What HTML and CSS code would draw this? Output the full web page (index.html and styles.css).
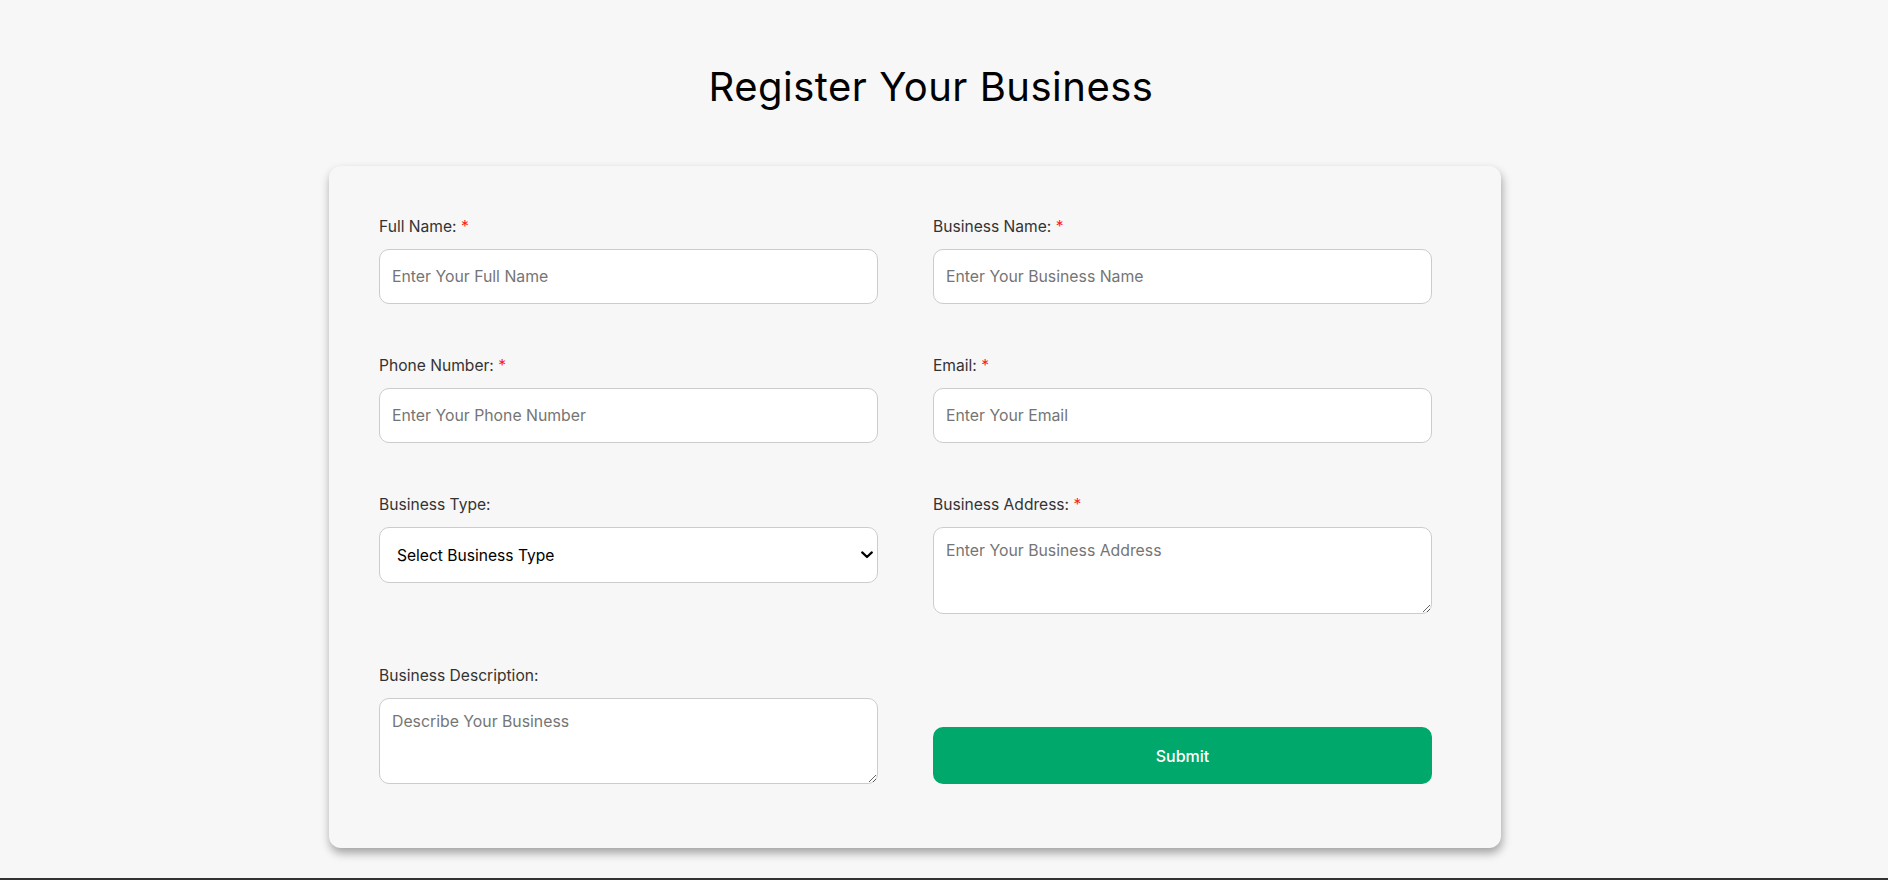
FILE: index.html
```html
<!DOCTYPE html>
<html lang="en">
<head>
<meta charset="utf-8">
<title>Register Your Business</title>
<link rel="stylesheet" href="styles.css">
</head>
<body>
<main class="page">
  <h1 class="title">Register Your Business</h1>
  <form class="card">
    <div class="field">
      <label class="label">Full Name: <span class="req">*</span></label>
      <input class="control" type="text" placeholder="Enter Your Full Name">
    </div>
    <div class="field">
      <label class="label">Business Name: <span class="req">*</span></label>
      <input class="control" type="text" placeholder="Enter Your Business Name">
    </div>
    <div class="field">
      <label class="label">Phone Number: <span class="req">*</span></label>
      <input class="control" type="text" placeholder="Enter Your Phone Number">
    </div>
    <div class="field">
      <label class="label">Email: <span class="req">*</span></label>
      <input class="control" type="text" placeholder="Enter Your Email">
    </div>
    <div class="field">
      <label class="label">Business Type:</label>
      <div class="select-wrap">
        <select class="control select">
          <option>Select Business Type</option>
        </select>
        <svg class="chevron" width="12" height="8" viewBox="0 0 12 8"><path d="M1.2 1.4 L6 6 L10.8 1.4" fill="none" stroke="#000" stroke-width="2.2" stroke-linecap="round" stroke-linejoin="round"/></svg>
      </div>
    </div>
    <div class="field">
      <label class="label">Business Address: <span class="req">*</span></label>
      <textarea class="control area" placeholder="Enter Your Business Address"></textarea>
    </div>
    <div class="field">
      <label class="label">Business Description:</label>
      <textarea class="control area area-desc" placeholder="Describe Your Business"></textarea>
    </div>
    <div class="field field-end">
      <button class="submit" type="button">Submit</button>
    </div>
  </form>
  <div class="footer"></div>
</main>
</body>
</html>
```

FILE: styles.css
```css
html, body {
  margin: 0;
  padding: 0;
  background: #f7f7f7;
}

body {
  font-family: Inter, "Noto Sans", sans-serif;
  color: #333;
}

.page {
  padding-top: 63px;
  display: flex;
  flex-direction: column;
}

.title {
  margin: 0;
  padding-right: 26px;
  text-align: center;
  font-size: 40px;
  letter-spacing: 0.5px;
  line-height: 48px;
  font-weight: 400;
  color: #000;
}

.card {
  box-sizing: border-box;
  width: 1172px;
  margin: 55px 0 0 329px;
  padding: 49px 69px 64px 50px;
  background: #f7f7f7;
  border-radius: 12px;
  box-shadow: 1px 5px 10px rgba(0, 0, 0, 0.35);
  display: grid;
  grid-template-columns: 1fr 1fr;
  column-gap: 55px;
  row-gap: 50px;
}

.field {
  display: flex;
  flex-direction: column;
}

.field-end {
  justify-content: flex-end;
}

.label {
  font-size: 15.6px;
  line-height: 24px;
  color: #333;
  margin-bottom: 10px;
}

.req {
  color: #ff1a1a;
}

.control {
  box-sizing: border-box;
  width: 100%;
  height: 55px;
  padding: 0 12px;
  border: 1px solid #ccc;
  border-radius: 10px;
  background: #fff;
  font-family: Inter, "Noto Sans", sans-serif;
  font-size: 15.8px;
  color: #000;
  outline: none;
}

.control::placeholder {
  color: #757575;
}

.select-wrap {
  position: relative;
}

.select {
  -webkit-appearance: none;
  appearance: none;
  height: 56px;
  padding-left: 17px;
  font-size: 15.6px;
  color: #000;
}

.chevron {
  position: absolute;
  right: 5px;
  top: 24px;
}

.area {
  height: 87px;
  padding: 11px 12px;
  line-height: 24px;
  resize: vertical;
}

.area-desc {
  height: 86px;
}

.submit {
  height: 57px;
  width: 100%;
  border: none;
  border-radius: 10px;
  background: #00a86b;
  color: #fff;
  font-family: Inter, "Noto Sans", sans-serif;
  font-size: 16px;
  font-weight: 500;
  cursor: pointer;
}

.footer {
  margin-top: 30px;
  height: 3px;
  background: #333;
}
```
